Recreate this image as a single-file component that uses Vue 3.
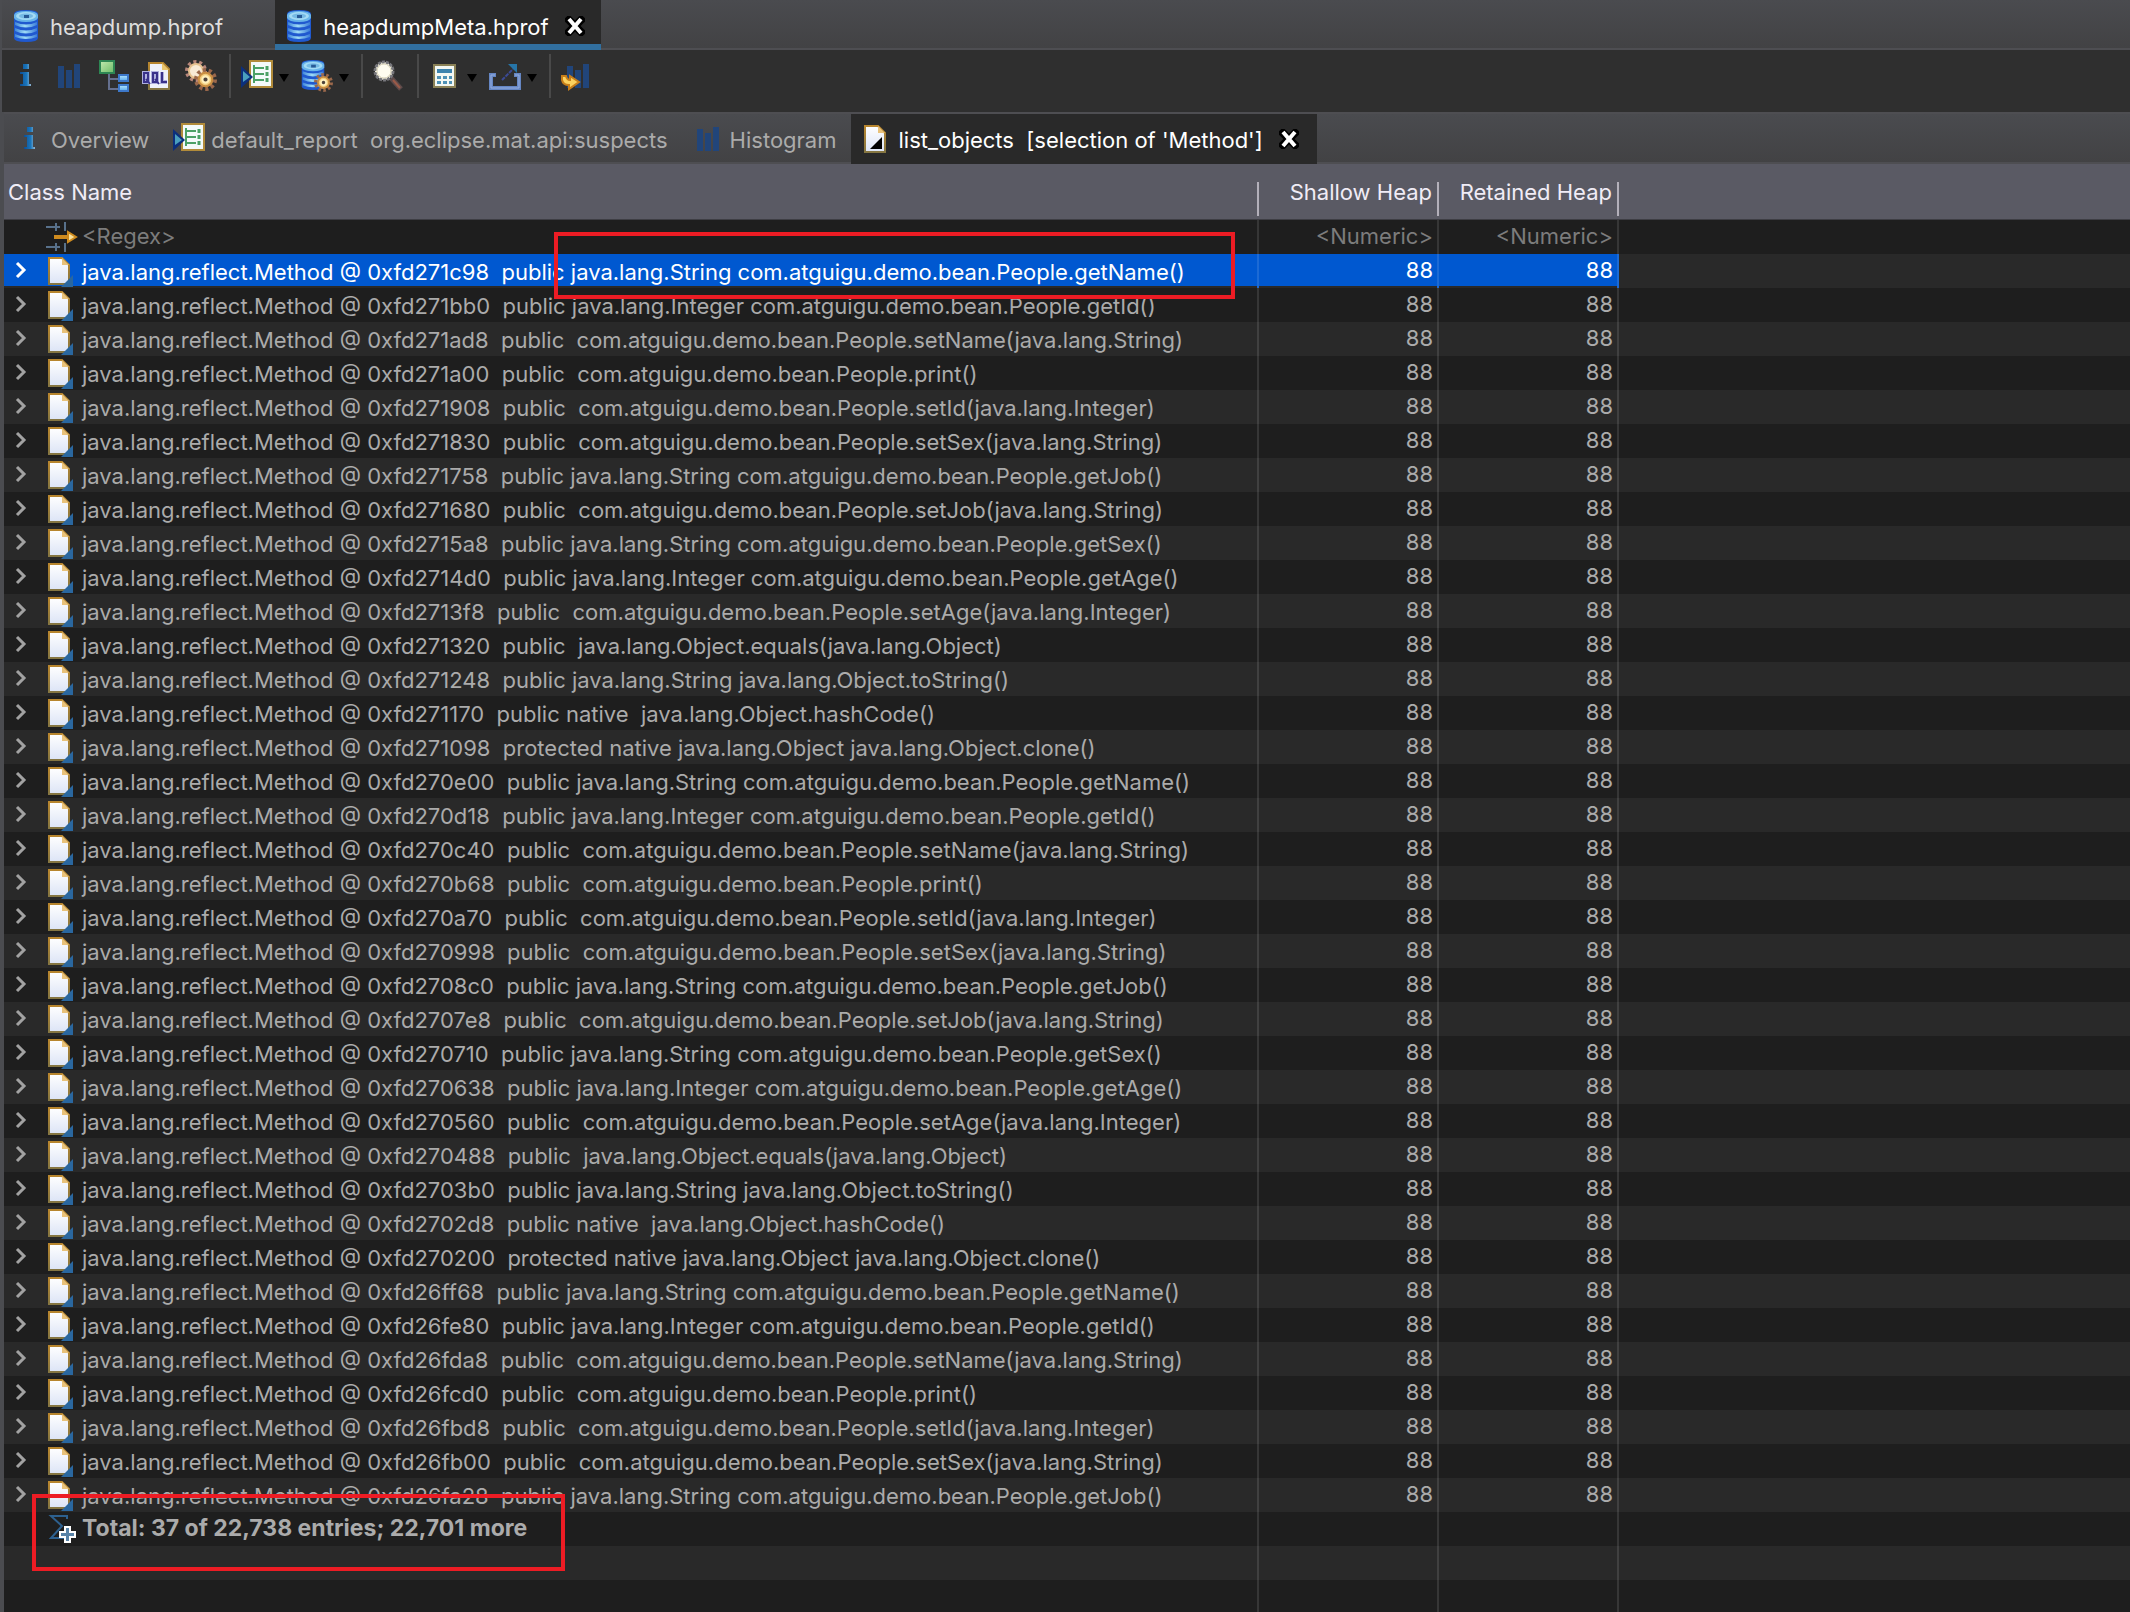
<script setup>
import { ref } from 'vue'

const P = 'com.atguigu.demo.bean.People.'
const methods = [
  `public java.lang.String ${P}getName()`,
  `public java.lang.Integer ${P}getId()`,
  `public  ${P}setName(java.lang.String)`,
  `public  ${P}print()`,
  `public  ${P}setId(java.lang.Integer)`,
  `public  ${P}setSex(java.lang.String)`,
  `public java.lang.String ${P}getJob()`,
  `public  ${P}setJob(java.lang.String)`,
  `public java.lang.String ${P}getSex()`,
  `public java.lang.Integer ${P}getAge()`,
  `public  ${P}setAge(java.lang.Integer)`,
  'public  java.lang.Object.equals(java.lang.Object)',
  'public java.lang.String java.lang.Object.toString()',
  'public native  java.lang.Object.hashCode()',
  'protected native java.lang.Object java.lang.Object.clone()',
]
const addresses = (
  '271c98 271bb0 271ad8 271a00 271908 271830 271758 271680 2715a8 2714d0 2713f8 271320 271248 271170 271098 ' +
  '270e00 270d18 270c40 270b68 270a70 270998 2708c0 2707e8 270710 270638 270560 270488 2703b0 2702d8 270200 ' +
  '26ff68 26fe80 26fda8 26fcd0 26fbd8 26fb00 26fa28'
).split(' ')

const rows = addresses.map((a, i) => ({
  id: a,
  label: `java.lang.reflect.Method @ 0xfd${a}  ${methods[i % methods.length]}`,
  shallow: 88,
  retained: 88,
}))
const selected = ref(rows[0].id)

const files = [
  { name: 'heapdump.hprof', active: false },
  { name: 'heapdumpMeta.hprof', active: true },
]
const toolGroups = [
  [{ icon: 'info', label: 'Overview' }, { icon: 'bars', label: 'Histogram' }, { icon: 'tree', label: 'Dominator tree' }, { icon: 'oql', label: 'OQL' }, { icon: 'gears', label: 'Thread overview' }],
  [{ icon: 'report', label: 'Run report', menu: true }, { icon: 'dbgear', label: 'Query browser', menu: true }],
  [{ icon: 'search', label: 'Find object' }],
  [{ icon: 'calc', label: 'Calculate retained size', menu: true }, { icon: 'export', label: 'Export', menu: true }],
  [{ icon: 'compare', label: 'Compare' }],
]
const views = [
  { icon: 'info', name: 'Overview' },
  { icon: 'report', name: 'default_report  org.eclipse.mat.api:suspects' },
  { icon: 'bars', name: 'Histogram' },
  { icon: 'listdoc', name: "list_objects  [selection of 'Method']", active: true },
]
</script>

<template>
  <div class="app">
    <svg class="defs" width="0" height="0" aria-hidden="true">
      <defs>
        <linearGradient id="gDb" x1="0" x2="1" y1="0" y2="0">
          <stop offset="0" stop-color="#3f86dc" /><stop offset=".45" stop-color="#9fdcf6" /><stop offset="1" stop-color="#3a7cd8" />
        </linearGradient>
        <linearGradient id="gDoc" x1="0" x2="0" y1="0" y2="1">
          <stop offset="0" stop-color="#ffffff" /><stop offset="1" stop-color="#dce4f6" />
        </linearGradient>
        <linearGradient id="gEdge" x1="0" x2="0" y1="0" y2="1">
          <stop offset="0" stop-color="#b8862e" /><stop offset="1" stop-color="#857642" />
        </linearGradient>
        <linearGradient id="gInfo" x1="0" x2="1" y1="0" y2="0">
          <stop offset="0" stop-color="#0c4f96" /><stop offset=".6" stop-color="#1a76bb" /><stop offset="1" stop-color="#8fb4d2" />
        </linearGradient>
        <linearGradient id="gGreen" x1="0" x2="1" y1="0" y2="1">
          <stop offset="0" stop-color="#c2eab0" /><stop offset="1" stop-color="#6cba66" />
        </linearGradient>
        <linearGradient id="gBlue" x1="0" x2="0" y1="0" y2="1">
          <stop offset="0" stop-color="#b6e8ff" /><stop offset="1" stop-color="#58a8ec" />
        </linearGradient>
      </defs>
      <symbol id="db" viewBox="0 0 32 32">
        <path d="M4 4Q4 0 16 0T28 4V28Q28 32 16 32T4 28Z" fill="#2059cf" />
        <path d="M5 12Q16 17 27 12V15Q16 20 5 15ZM5 18Q16 23 27 18V21Q16 26 5 21ZM5 24Q16 29 27 24V27Q16 31 5 27Z" fill="url(#gDb)" />
        <path d="M4 5Q5 1 16 1T28 5V8Q26 12 16 12T4 8Z" fill="#68b4ea" />
        <ellipse cx="16" cy="6" rx="10" ry="4" fill="#a4daf4" />
        <ellipse cx="16" cy="6" rx="7" ry="2.5" fill="#75b9e4" />
        <rect x="14" y="5" width="5" height="3" fill="#285a96" />
      </symbol>
      <symbol id="info" viewBox="0 0 32 32">
        <path d="M14 4h6v5h-6zM11 12h9v12h2v2H11v-2h3V14h-3z" fill="url(#gInfo)" />
      </symbol>
      <symbol id="bars" viewBox="0 0 32 32" fill="#21457a">
        <path d="M5 6h6v22H5zM13 10h6v18h-6zM21 4h6v24h-6z" />
      </symbol>
      <symbol id="tree" viewBox="0 0 32 32">
        <path d="M12 14V29H21M12 19H21" fill="none" stroke="#65708f" stroke-width="2" />
        <rect x="3" y="1" width="14" height="12" fill="url(#gGreen)" stroke="#2d8653" stroke-width="2" />
        <rect x="22" y="15" width="9" height="6" fill="url(#gBlue)" stroke="#3d78c9" stroke-width="2" />
        <rect x="22" y="25" width="9" height="6" fill="url(#gBlue)" stroke="#3d78c9" stroke-width="2" />
      </symbol>
      <symbol id="oql" viewBox="0 0 32 32">
        <path d="M8 3H22L28 9V29H8Z" fill="#eef2fa" stroke="url(#gEdge)" stroke-width="2" />
        <path d="M21 3v7h7z" fill="#eac66e" />
        <g fill="none" stroke="#aeb0dd" stroke-width="4"><path d="M3 13h4v9H3zM12 13h4v9h-4zM21 12v10h5" /></g>
        <g fill="none" stroke="#39328a" stroke-width="2"><path d="M3 13h4v9H3zM12 13h4v9h-4zM5 19l4 5M14 19l4 5M21 12v10h5" /></g>
      </symbol>
      <symbol id="gear" viewBox="0 0 22 22">
        <circle cx="11" cy="11" r="9" fill="none" stroke="#9b684b" stroke-width="4" stroke-dasharray="3 2.65" />
        <circle cx="11" cy="11" r="6.5" fill="#f3cd7c" stroke="#c98e43" stroke-width="2" />
        <circle cx="11" cy="11" r="3" fill="#4e433c" stroke="#fff0bd" stroke-width="2" />
      </symbol>
      <symbol id="gears" viewBox="0 0 32 32">
        <circle cx="11" cy="11" r="9" fill="none" stroke="#b8877a" stroke-width="4" stroke-dasharray="3 2.65" />
        <circle cx="11" cy="11" r="7" fill="#f8ead6" stroke="#e6c391" stroke-width="2" />
        <use href="#gear" x="9" y="8" width="23" height="23" />
      </symbol>
      <symbol id="report" viewBox="0 0 32 32">
        <rect x="9" y="1" width="22" height="26" fill="#f3fafa" stroke="#b18b3a" stroke-width="2" />
        <path d="M13 5v18M13 8h10M13 14h10M13 20h10" fill="none" stroke="#4ba166" stroke-width="2" />
        <path d="M26 6v4M26 12v4M26 18v4" stroke="#4ba166" stroke-width="3" />
        <path d="M0 6L12 17 0 28Z" fill="#0c2f7c" /><path d="M2 11L9 17 2 22Z" fill="#4a9fbe" />
      </symbol>
      <symbol id="dbgear" viewBox="0 0 32 32">
        <use href="#db" x="-4" y="0" width="32" height="30" />
        <use href="#gear" x="13" y="13" width="19" height="19" />
      </symbol>
      <symbol id="search" viewBox="0 0 32 32">
        <path d="M18 18L28 29" stroke="#5d4b4b" stroke-width="5" /><path d="M20 20L27 28" stroke="#9a5a48" stroke-width="2" />
        <circle cx="11" cy="11" r="9" fill="#fffce9" stroke="#77777c" stroke-width="3" stroke-dasharray="3 1" />
        <circle cx="11" cy="11" r="7" fill="#fffdf0" stroke="#d8d2b8" stroke-width="1" />
      </symbol>
      <symbol id="calc" viewBox="0 0 32 32">
        <rect x="5" y="5" width="21" height="22" fill="#f3f7f2" stroke="#8a8156" stroke-width="2" />
        <path d="M8 9h15v4H8z" fill="#3d83ad" />
        <path d="M8 16h4v3H8zM14 16h4v3h-4zM20 16h3v3h-3zM8 21h4v3H8zM14 21h4v3h-4zM20 21h3v3h-3z" fill="#4e91b5" />
      </symbol>
      <symbol id="export" viewBox="0 0 32 32">
        <path d="M7 15H2V28H30V15H25" fill="none" stroke="#6586c3" stroke-width="4" />
        <path d="M6 15H2V28H30V15H26" fill="none" stroke="#96aee0" stroke-width="1" />
        <path d="M13 20L24 9" stroke="#3b4a95" stroke-width="2" stroke-dasharray="4 1" />
        <path d="M19 4H28V13Z" fill="#2675a8" />
      </symbol>
      <symbol id="compare" viewBox="0 0 32 32">
        <path d="M6 6h6v22H6zM14 10h6v18h-6zM22 4h6v24h-6z" fill="#21457a" />
        <path d="M1 16V20Q2 25 8 25V29L18 22 9 16V20Q6 20 5 16Z" fill="#fbd25f" stroke="#c77e19" stroke-width="2" />
      </symbol>
      <symbol id="doc" viewBox="0 0 32 32">
        <path d="M5 3H18L25 10V29H5Z" fill="url(#gDoc)" stroke="url(#gEdge)" stroke-width="2" />
        <path d="M18 3V10H25Z" fill="#e9c27a" />
      </symbol>
      <symbol id="listdoc" viewBox="0 0 32 32">
        <use href="#doc" width="32" height="32" /><path d="M10 26L22 14V26Z" fill="#000" />
      </symbol>
      <symbol id="object" viewBox="0 0 32 32">
        <use href="#doc" width="32" height="32" /><path d="M17 32L29 20V32Z" fill="#2a679f" />
      </symbol>
      <symbol id="filter" viewBox="0 0 32 32">
        <path d="M0 6H14M10 2V10M19 1V10M0 26H14M10 22V30M19 22V31" fill="none" stroke="#58718b" stroke-width="2" />
        <path d="M9 15H22V11L30 16 22 21V17H9Z" fill="#fbe29b" stroke="#cf8b1e" stroke-width="2" />
      </symbol>
      <symbol id="sigma" viewBox="0 0 32 32">
        <path d="M21 7V4H5L16 14 5 26H18" fill="none" stroke="#2d608f" stroke-width="2" />
        <path d="M19 15h5v5h5v5h-5v5h-5v-5h-5v-5h5z" fill="#5883a8" stroke="#fff" stroke-width="2" />
      </symbol>
      <symbol id="close" viewBox="0 0 20 20">
        <path d="M4 4L16 16M16 4L4 16" stroke="#000" stroke-width="8" stroke-linecap="square" />
        <path d="M4 3L16 17M16 3L4 17" stroke="#fff" stroke-width="4" />
      </symbol>
    </svg>

    <nav class="files" role="tablist" aria-label="Open files">
      <div v-for="f in files" :key="f.name" class="file" :class="{ active: f.active }">
        <button class="tab" role="tab" :aria-selected="f.active">
          <svg class="icon"><use href="#db" /></svg><span>{{ f.name }}</span>
        </button>
        <button class="close" :aria-label="'Close ' + f.name"><svg><use href="#close" /></svg></button>
      </div>
    </nav>

    <div class="toolbar" role="toolbar">
      <div v-for="(g, gi) in toolGroups" :key="gi" class="group">
        <button v-for="t in g" :key="t.icon" class="tool" :aria-label="t.label">
          <svg class="icon"><use :href="'#' + t.icon" /></svg>
          <i v-if="t.menu" class="arrow"></i>
        </button>
      </div>
    </div>

    <section class="editor">
      <nav class="views" role="tablist" aria-label="Views">
        <div v-for="v in views" :key="v.name" class="view" :class="{ active: v.active }">
          <button class="tab" role="tab" :aria-selected="!!v.active">
            <svg class="icon"><use :href="'#' + v.icon" /></svg><span>{{ v.name }}</span>
          </button>
          <button v-if="v.active" class="close" aria-label="Close view"><svg><use href="#close" /></svg></button>
        </div>
      </nav>

      <div class="list">
        <table>
          <colgroup><col class="c-name" /><col class="c-num" /><col class="c-num" /><col /></colgroup>
          <thead>
            <tr><th class="left">Class Name</th><th>Shallow Heap</th><th>Retained Heap</th><td></td></tr>
          </thead>
          <tbody>
            <tr>
              <td><div class="cell"><svg class="icon first"><use href="#filter" /></svg><input aria-label="Class name filter" placeholder="<Regex>" /></div></td>
              <td><input class="num" aria-label="Shallow heap filter" placeholder="<Numeric>" /></td>
              <td><input class="num" aria-label="Retained heap filter" placeholder="<Numeric>" /></td>
              <td></td>
            </tr>
            <tr v-for="r in rows" :key="r.id" :class="{ selected: r.id === selected }" @click="selected = r.id">
              <td>
                <div class="cell">
                  <button class="expand" aria-label="Expand">
                    <svg viewBox="0 0 12 18"><path d="M2 2L9 9L2 16" /></svg>
                  </button>
                  <svg class="icon"><use href="#object" /></svg>
                  <span>{{ r.label }}</span>
                </div>
              </td>
              <td class="num">{{ r.shallow }}</td>
              <td class="num">{{ r.retained }}</td>
              <td></td>
            </tr>
            <tr>
              <td><div class="cell total"><svg class="icon first"><use href="#sigma" /></svg><strong>Total: 37 of 22,738 entries; 22,701 more</strong></div></td>
              <td></td><td></td><td></td>
            </tr>
            <tr v-for="n in 2" :key="n"><td></td><td></td><td></td><td></td></tr>
          </tbody>
        </table>
        <div class="mark mark-row"></div>
        <div class="mark mark-total"></div>
      </div>
    </section>
  </div>
</template>

<style>
body { background: #1e1e1e; }
</style>

<style scoped>
* { box-sizing: border-box; }
.app {
  height: 100vh;
  overflow: hidden;
  display: flex;
  flex-direction: column;
  border-left: 2px solid #4b4c50;
  background: #1e1e1e;
  color: #ababab;
  font: 22px/34px Inter, "Liberation Sans", sans-serif;
}
.defs { position: absolute; }
button, input { font: inherit; color: inherit; background: none; border: 0; padding: 0; margin: 0; }
.icon { width: 32px; height: 32px; flex: none; display: block; }
.tab { display: flex; align-items: center; gap: 8px; white-space: pre; }
.tab span { padding-top: 2px; }
.close { width: 20px; height: 20px; flex: none; }
.close svg { width: 20px; height: 20px; display: block; }

.files {
  display: flex;
  height: 50px;
  flex: none;
  background: linear-gradient(#4a4b4f, #424244);
  border-bottom: 2px solid #4e4e52;
}
.file {
  display: flex;
  align-items: center;
  gap: 16px;
  height: 50px;
  padding: 4px 16px 0 8px;
  color: #dedede;
  border-bottom: 2px solid #4e4e52;
}
.file.active { background: #292929; color: #fff; border-bottom: 6px solid #316f9f; padding-top: 8px; }
.file:not(.active) .close { visibility: hidden; }

.toolbar { display: flex; flex: none; height: 62px; padding: 4px 0 0 7px; background: #2f2f2f; }
.group { display: flex; gap: 12px; height: 44px; padding-top: 6px; }
.group + .group { margin-left: 12px; padding-left: 10px; border-left: 2px solid #494949; }
.tool { display: flex; align-items: center; gap: 6px; height: 32px; }
.arrow { border: 5px solid transparent; border-top: 8px solid #000; border-bottom: 0; margin-top: 4px; }

.editor { flex: 1; min-height: 0; display: flex; flex-direction: column; border-left: 2px solid #4b4c50; }
.views {
  display: flex;
  flex: none;
  height: 52px;
  background: linear-gradient(#4a4b4f, #424244);
  border-top: 2px solid #4e4e52;
  border-bottom: 2px solid #4e4e52;
}
.view { display: flex; align-items: center; gap: 16px; height: 50px; padding: 0 15px 0 9px; }
.view .tab { gap: 6px; }
.view.active { background: #292929; color: #fff; padding-right: 18px; }

.list { position: relative; flex: 1; min-height: 0; overflow: hidden; }
table { width: 100%; table-layout: fixed; border-collapse: separate; border-spacing: 0; }
.c-name { width: 1255px; }
.c-num { width: 180px; }
th, thead td { height: 56px; padding: 0 7px 0 4px; background: #5a5a64; border-bottom: 1px solid #3e3e44; }
th {
  color: #f0ecf6;
  font-weight: 400;
  text-align: right;
  background: linear-gradient(#b3b0ba, #b3b0ba) right 18px / 2px 34px no-repeat #5a5a64;
}
th.left { text-align: left; }
tbody td { height: 34px; padding: 0; white-space: pre; vertical-align: top; border-right: 2px solid rgba(255, 255, 255, .11); }
tbody td:last-child { border-right: 0; }
tbody tr:nth-child(even) { background: #292929; }
tbody .num { text-align: right; padding-right: 4px; line-height: 32px; }
input { display: block; width: 100%; height: 32px; outline: 0; }
input::placeholder { color: #7c7c7c; opacity: 1; }
.cell { display: flex; align-items: center; height: 34px; padding-left: 11px; }
.cell > span { padding-top: 2px; }
.cell input { flex: 1; align-self: flex-start; }
.expand { width: 12px; height: 18px; margin: 0 17px 2px 0; flex: none; }
.expand svg { width: 12px; height: 18px; display: block; fill: none; stroke: #a2a2a2; stroke-width: 3; }
.cell .icon { margin-right: 6px; }
.cell .first { margin-left: 31px; margin-right: 4px; }
.total { height: 32px; font-size: 23px; }
.selected td:not(:last-child) { background: #0058d0; box-shadow: inset 0 -2px #292929; color: #fff; }
.selected .expand svg { stroke: #fff; }
.mark { position: absolute; border: 4px solid #ed1c24; pointer-events: none; }
.mark-row { left: 550px; top: 68px; width: 681px; height: 67px; }
.mark-total { left: 28px; top: 1330px; width: 533px; height: 77px; }
</style>
